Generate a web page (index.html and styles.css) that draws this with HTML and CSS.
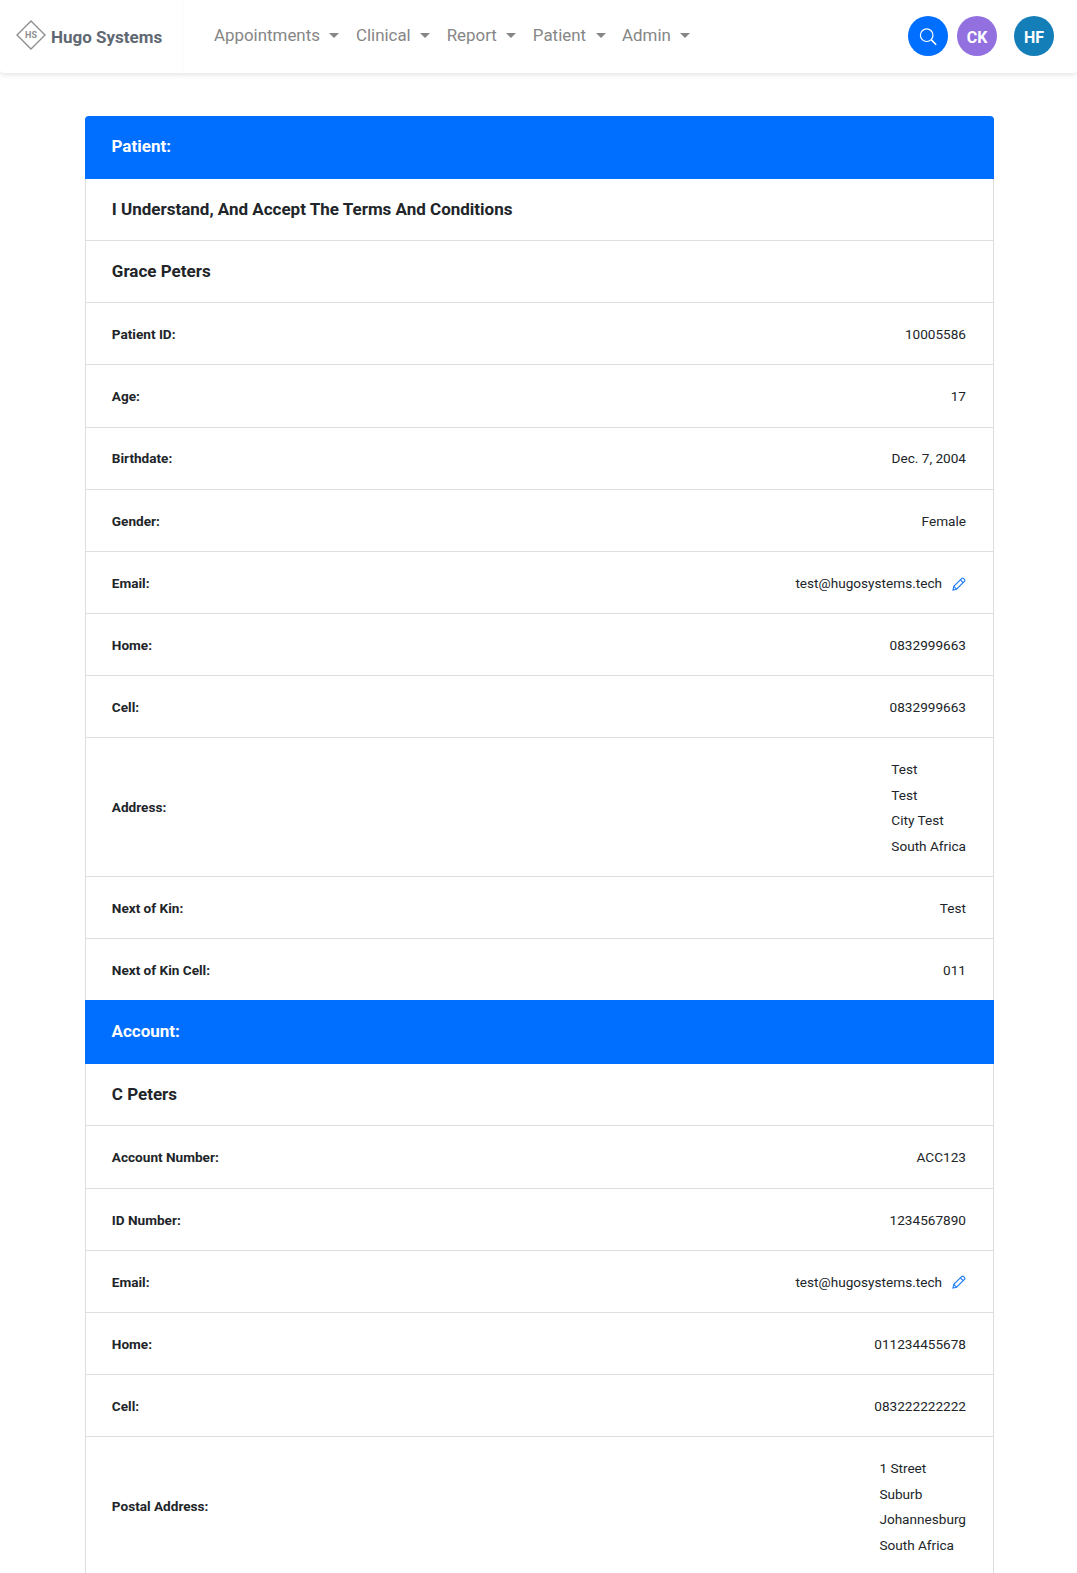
FILE: index.html
```html
<!DOCTYPE html>
<html lang="en">
<head>
    <meta charset="UTF-8">
    <meta name="viewport" content="width=device-width, initial-scale=1.0">
    <title>Patient Details</title>
    <link rel="stylesheet" href="styles.css">
</head>
<body>

    <!-- Navbar -->
    <nav class="navbar">
        <a class="brand" href="#">
            <svg class="brand-logo" width="30" height="30" viewBox="0 0 30 30">
                <path d="M15 1 L29 15 L15 29 L1 15 Z" fill="none" stroke="#8e8e8e" stroke-width="1.4"/>
                <text x="15" y="18" text-anchor="middle" class="brand-mark">HS</text>
            </svg>
            <span>Hugo Systems</span>
        </a>
        <ul class="nav-menu">
            <li class="nav-item">Appointments</li>
            <li class="nav-item">Clinical</li>
            <li class="nav-item">Report</li>
            <li class="nav-item">Patient</li>
            <li class="nav-item">Admin</li>
        </ul>
        <div class="nav-actions">
            <span class="circle circle-search">
                <svg width="20" height="20" viewBox="0 0 20 20" fill="none" stroke="#fff">
                    <circle cx="8.7" cy="9.2" r="6.3" stroke-width="1.2"/>
                    <path d="M13.4 13.9 L18.2 18.7" stroke-width="1.6"/>
                </svg>
            </span>
            <span class="circle circle-ck">CK</span>
            <span class="circle circle-hf">HF</span>
        </div>
    </nav>

    <div class="content">
        <div class="card">
            <!-- Patient -->
            <div class="card-header card-header-first">Patient:</div>
            <div class="row row-title">I Understand, And Accept The Terms And Conditions</div>
            <div class="row row-title">Grace Peters</div>
            <div class="row"><strong>Patient ID:</strong><span>10005586</span></div>
            <div class="row"><strong>Age:</strong><span>17</span></div>
            <div class="row"><strong>Birthdate:</strong><span>Dec. 7, 2004</span></div>
            <div class="row"><strong>Gender:</strong><span>Female</span></div>
            <div class="row">
                <strong>Email:</strong>
                <span class="email">test@hugosystems.tech
                    <svg class="edit-icon" width="14" height="14" viewBox="0 0 14 14" fill="none" stroke="#1f7cf5" stroke-width="1.15">
                        <path d="M1 13 L1.8 9.4 L9.6 1.6 Q10.6 0.6 11.6 1.6 L12.4 2.4 Q13.4 3.4 12.4 4.4 L4.6 12.2 Z"/>
                        <path d="M8.4 2.8 L11.2 5.6 M1.8 9.4 L4.6 12.2"/>
                    </svg>
                </span>
            </div>
            <div class="row"><strong>Home:</strong><span>0832999663</span></div>
            <div class="row"><strong>Cell:</strong><span>0832999663</span></div>
            <div class="row">
                <strong>Address:</strong>
                <div class="address">
                    <div>Test</div>
                    <div>Test</div>
                    <div>City Test</div>
                    <div>South Africa</div>
                </div>
            </div>
            <div class="row"><strong>Next of Kin:</strong><span>Test</span></div>
            <div class="row row-last"><strong>Next of Kin Cell:</strong><span>011</span></div>

            <!-- Account -->
            <div class="card-header">Account:</div>
            <div class="row row-title">C Peters</div>
            <div class="row"><strong>Account Number:</strong><span>ACC123</span></div>
            <div class="row"><strong>ID Number:</strong><span>1234567890</span></div>
            <div class="row">
                <strong>Email:</strong>
                <span class="email">test@hugosystems.tech
                    <svg class="edit-icon" width="14" height="14" viewBox="0 0 14 14" fill="none" stroke="#1f7cf5" stroke-width="1.15">
                        <path d="M1 13 L1.8 9.4 L9.6 1.6 Q10.6 0.6 11.6 1.6 L12.4 2.4 Q13.4 3.4 12.4 4.4 L4.6 12.2 Z"/>
                        <path d="M8.4 2.8 L11.2 5.6 M1.8 9.4 L4.6 12.2"/>
                    </svg>
                </span>
            </div>
            <div class="row"><strong>Home:</strong><span>011234455678</span></div>
            <div class="row"><strong>Cell:</strong><span>083222222222</span></div>
            <div class="row">
                <strong>Postal Address:</strong>
                <div class="address">
                    <div>1 Street</div>
                    <div>Suburb</div>
                    <div>Johannesburg</div>
                    <div>South Africa</div>
                </div>
            </div>
        </div>
    </div>

</body>
</html>
```

FILE: styles.css
```css
html, body {
    height: 100vh;
    overflow: hidden;
}

body {
    margin: 0;
    padding: 0;
    background: #fff;
    font-family: Roboto, "Liberation Sans", Arial, sans-serif;
    font-size: 13.6px;
    color: #212529;
    box-sizing: border-box;
}

/* Navbar */
.navbar {
    display: flex;
    align-items: center;
    height: 73px;
    box-sizing: border-box;
    background: #fff;
    border-radius: 0 0 4px 4px;
    box-shadow: 0 2px 5px rgba(0, 0, 0, 0.1);
}

.brand {
    display: flex;
    align-items: center;
    gap: 5px;
    width: 183px;
    height: 100%;
    box-sizing: border-box;
    padding-left: 16px;
    color: #5f6872;
    font-size: 17px;
    font-weight: 700;
    text-decoration: none;
    border-right: 1px solid #fafafa;
}

.brand-logo {
    margin-top: -3px;
}

.brand-mark {
    font-family: Roboto, sans-serif;
    font-size: 9px;
    font-weight: 700;
    fill: #8e8e8e;
}

.nav-menu {
    display: flex;
    gap: 16.5px;
    list-style: none;
    margin: -3px 0 0;
    padding: 0 0 0 31px;
    color: #868686;
    font-size: 16.9px;
}

.nav-item::after {
    content: "";
    display: inline-block;
    margin-left: 9.5px;
    vertical-align: 3px;
    border-top: 5.5px solid #868686;
    border-left: 5.5px solid transparent;
    border-right: 5.5px solid transparent;
}

.nav-actions {
    display: flex;
    margin: -1px 0 0 auto;
    padding-right: 23px;
    gap: 9px;
}

.circle {
    display: flex;
    align-items: center;
    justify-content: center;
    width: 40px;
    height: 40px;
    box-sizing: border-box;
    border-radius: 50%;
    color: #fff;
    font-size: 16px;
    font-weight: 700;
}

.circle-search {
    background: #006eff;
}

.circle-ck {
    background: #9370e0;
    padding-top: 2px;
}

.circle-hf {
    background: #137eb8;
    margin-left: 8px;
    padding-top: 2px;
}

/* Card */
.content {
    width: 909px;
    margin: 43px 0 0 85px;
}

.card-header {
    height: 64px;
    padding: 0 0 2px 26.5px;
    box-sizing: border-box;
    display: flex;
    align-items: center;
    background: #006eff;
    color: #fff;
    font-size: 17px;
    font-weight: 700;
}

.card-header-first {
    height: 63px;
    padding-bottom: 3px;
    border-radius: 4px 4px 0 0;
}

.row {
    display: flex;
    justify-content: space-between;
    align-items: center;
    padding: 18.95px 27px 16.6px 25.8px;
    line-height: 25.6px;
    border: 1px solid #dedede;
    border-top: none;
}

.row strong {
    font-weight: 700;
    color: #212529;
}

.row-title {
    padding: 17.5px 27px 18.05px 25.8px;
    font-size: 17px;
    font-weight: 700;
}

.row-last {
    border-bottom: none;
}

.email {
    display: flex;
    align-items: center;
    gap: 10px;
}

.edit-icon {
    display: block;
}
```
